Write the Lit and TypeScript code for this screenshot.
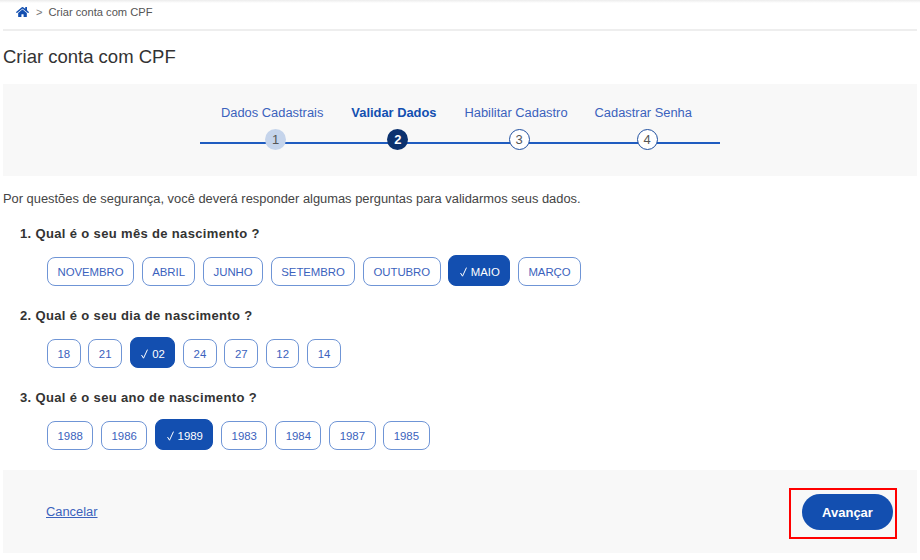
import { LitElement, html, css } from "lit";
import { customElement } from "lit/decorators.js";

const steps = [
  { label: "Dados Cadastrais", cls: "done", gap: 21, offset: 44 },
  { label: "Validar Dados", cls: "current", gap: 28, offset: 36 },
  { label: "Habilitar Cadastro", cls: "todo", gap: 28, offset: 44 },
  { label: "Cadastrar Senha", cls: "todo", gap: 27, offset: 42 },
];

const questions = [
  { title: "1. Qual é o seu mês de nascimento ?", options: ["NOVEMBRO", "ABRIL", "JUNHO", "SETEMBRO", "OUTUBRO", "MAIO", "MARÇO"], selected: "MAIO", alpha: true },
  { title: "2. Qual é o seu dia de nascimento ?", options: ["18", "21", "02", "24", "27", "12", "14"], selected: "02", alpha: false },
  { title: "3. Qual é o seu ano de nascimento ?", options: ["1988", "1986", "1989", "1983", "1984", "1987", "1985"], selected: "1989", alpha: false },
];

@customElement("app-root")
export class AppRoot extends LitElement {
  static styles = css`
    :host { display: block; width: 920px; height: 560px; overflow: hidden; background: #fff; font-family: "Liberation Sans", Arial, sans-serif; color: #333; box-sizing: border-box; padding: 0 3px; }
    .topshade { height: 3px; margin: 0 -3px; background: linear-gradient(#ececec, #fff); }
    .crumbs { display: flex; align-items: center; height: 26px; padding: 0 0 9px 13px; box-sizing: border-box; font-size: 11.15px; color: #555; }
    .crumbs svg { width: 13px; height: 12px; fill: #134fb0; display: block; }
    .crumbs .sep { margin: 0 6px 0 7px; color: #777; }
    .rule { height: 2px; background: #eeeeee; }
    h1 { margin: 0; height: 53px; padding-bottom: 2px; box-sizing: border-box; display: flex; align-items: center; font-size: 18.5px; font-weight: 400; color: #333; }
    .stepper { height: 92px; background: #f8f8f8; display: flex; justify-content: center; box-sizing: border-box; padding-top: 21px; }
    .track { position: relative; width: 520px; height: 48px; display: flex; }
    .line { position: absolute; left: 0; right: 0; top: 37px; height: 2px; background: #1f5cc0; }
    .step { display: flex; flex-direction: column; align-items: flex-start; position: relative; }
    .label { font-size: 12.88px; line-height: 16px; color: #3b62bd; white-space: nowrap; }
    .current .label { font-weight: 700; color: #134fb0; }
    .dot { width: 21px; height: 21px; box-sizing: border-box; border-radius: 50%; margin-top: 8px; display: flex; align-items: center; justify-content: center; font-size: 13px; }
    .done .dot { background: #c5d4eb; color: #555; }
    .current .dot { background: #0c326f; color: #fff; font-weight: 700; }
    .todo .dot { background: #fff; border: 1px solid #1f4f9f; color: #555; }
    .intro { margin: 0; padding-top: 15px; font-size: 12.88px; line-height: 16px; color: #444; }
    .q { padding-left: 17px; }
    .q h2 { margin: 0; font-size: 13px; line-height: 16px; font-weight: 700; letter-spacing: .35px; color: #333; }
    .first { padding-top: 19px; }
    .q + .q { padding-top: 22px; }
    .opts { display: flex; align-items: flex-end; gap: 7.7px; padding: 13px 0 0 27px; }
    .opts.alpha { letter-spacing: -.05px; }
    .opt { height: 29px; padding: 0 9.5px; box-sizing: border-box; border: 1px solid #6f95d6; border-radius: 8px; background: #fff; color: #3b62bd; font: 400 11.4px "Liberation Sans", Arial, sans-serif; letter-spacing: inherit; display: flex; align-items: center; }
    .opt.sel { height: 31px; padding-top: 2px; background: #134fb0; border-color: #134fb0; color: #fff; }
    .check { display: block; width: 7px; height: 10px; margin: 0 4px 0 1px; fill: none; stroke: #fff; stroke-width: 1; }
    .footer { margin-top: 20px; height: 83px; background: #f8f8f8; display: flex; align-items: center; justify-content: space-between; padding: 0 20px 0 43px; }
    .footer a { color: #3b62bd; font-size: 12.88px; text-decoration: underline; }
    .outline { border: 2px solid #f00; padding: 4px 2px 7px 11px; margin-top: 4px; display: flex; }
    .go { width: 91px; height: 36px; border: 0; border-radius: 18px; background: #134fb0; color: #fff; font: 700 13px "Liberation Sans", Arial, sans-serif; }
  `;

  render() {
    return html`
      <div class="topshade"></div>
      <nav class="crumbs">
        <svg viewBox="0 0 576 512"><path d="M280.37 148.26L96 300.11V464a16 16 0 0 0 16 16l112.06-.29a16 16 0 0 0 15.92-16V368a16 16 0 0 1 16-16h64a16 16 0 0 1 16 16v95.64a16 16 0 0 0 16 16.05L464 480a16 16 0 0 0 16-16V300L295.67 148.26a12.19 12.19 0 0 0-15.3 0zM571.6 251.47L488 182.56V44.05a12 12 0 0 0-12-12h-56a12 12 0 0 0-12 12v72.61L318.47 43a48 48 0 0 0-61 0L4.34 251.47a12 12 0 0 0-1.6 16.9l25.5 31A12 12 0 0 0 45.15 301l235.22-193.74a12.19 12.19 0 0 1 15.3 0L530.9 301a12 12 0 0 0 16.9-1.6l25.5-31a12 12 0 0 0-1.7-16.93z"/></svg>
        <span class="sep">&gt;</span><span>Criar conta com CPF</span>
      </nav>
      <div class="rule"></div>
      <h1>Criar conta com CPF</h1>
      <section class="stepper">
        <div class="track">
          <div class="line"></div>
          ${steps.map((s, i) => html`
            <div class="step ${s.cls}" style="margin-left:${s.gap}px">
              <span class="label">${s.label}</span>
              <span class="dot" style="margin-left:${s.offset}px">${i + 1}</span>
            </div>`)}
        </div>
      </section>
      <p class="intro">Por questões de segurança, você deverá responder algumas perguntas para validarmos seus dados.</p>
      ${questions.map((q, i) => html`
        <div class="q ${i === 0 ? "first" : ""}">
          <h2>${q.title}</h2>
          <div class="opts ${q.alpha ? "alpha" : ""}">
            ${q.options.map((o) => html`<button class="opt ${o === q.selected ? "sel" : ""}">${o === q.selected ? html`<svg class="check" viewBox="0 0 7 10"><path d="M.5 6l2 3.2L6.5.6"/></svg>` : ""}${o}</button>`)}
          </div>
        </div>`)}
      <footer class="footer">
        <a href="#">Cancelar</a>
        <div class="outline"><button class="go">Avançar</button></div>
      </footer>
    `;
  }
}
